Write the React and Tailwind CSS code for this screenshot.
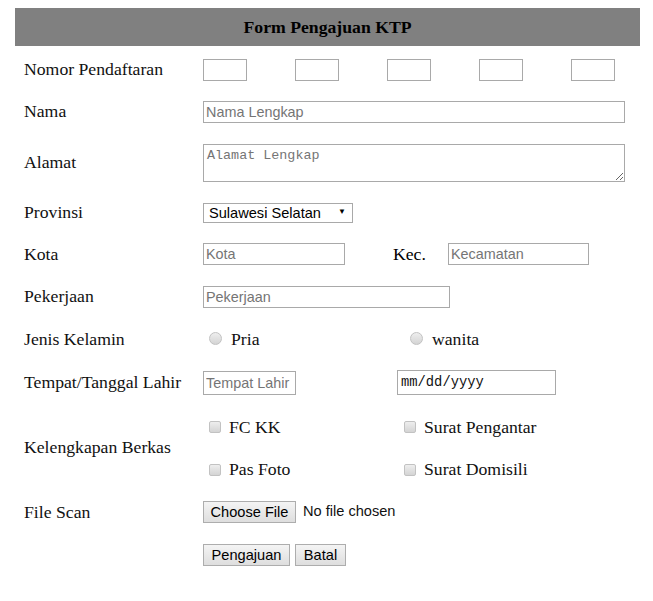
import React from "react";

const inputCls =
  "h-[22px] border border-[#a9a9a9] bg-white px-[2px] text-[14.4px] font-['Liberation_Sans',Arial,sans-serif] text-[#222] placeholder:text-[#757575] outline-none";
const btnCls =
  "h-[22px] whitespace-nowrap border border-[#adadad] bg-linear-to-b from-[#f4f4f4] to-[#dedede] px-[4px] text-[14.6px] leading-none font-['Liberation_Sans',Arial,sans-serif] text-black";
const radioCls =
  "appearance-none w-[13px] h-[13px] rounded-full border border-[#c2c2c2] bg-linear-to-b from-[#eeeeee] to-[#d4d4d4]";
const checkCls =
  "appearance-none w-[12px] h-[12px] rounded-[2px] border border-[#c2c2c2] bg-linear-to-b from-[#eeeeee] to-[#d4d4d4]";

function Row({ label, className, children }) {
  return (
    <div className={`flex items-center ${className}`}>
      <div className="w-[188px] shrink-0 pl-[9px]">{label}</div>
      <div className="flex items-center">{children}</div>
    </div>
  );
}

function Choice({ type, label, className }) {
  return (
    <label className={`flex items-center ${className}`}>
      <input type={type} name={type === "radio" ? "jk" : undefined} className={type === "radio" ? radioCls : checkCls} />
      <span className={type === "radio" ? "ml-[9px]" : "ml-[8px]"}>{label}</span>
    </label>
  );
}

export default function App() {
  return (
    <div className="min-h-screen bg-white font-['Liberation_Serif','Times_New_Roman',serif] text-[17.7px] text-[#111]">
      <div className="ml-[15px] w-[625px] pt-[8px]">
        {/* Judul form */}
        <div className="flex h-[38px] items-center justify-center bg-[#808080] font-bold text-black">
          Form Pengajuan KTP
        </div>

        <div className="mt-[3px]">
          <Row label="Nomor Pendaftaran" className="h-[41px]">
            <div className="flex gap-[48px]">
              <input className={`${inputCls} w-[44px]`} />
              <input className={`${inputCls} w-[44px]`} />
              <input className={`${inputCls} w-[44px]`} />
              <input className={`${inputCls} w-[44px]`} />
              <input className={`${inputCls} w-[44px]`} />
            </div>
          </Row>

          <Row label="Nama" className="h-[43px]">
            <input className={`${inputCls} w-[422px]`} placeholder="Nama Lengkap" />
          </Row>

          <Row label="Alamat" className="h-[58px]">
            <textarea
              className="mt-[2px] h-[38px] w-[422px] border border-[#a9a9a9] px-[3px] py-[3px] font-['Liberation_Mono',monospace] text-[13.4px] leading-[16px] text-[#222] placeholder:text-[#757575] outline-none"
              placeholder="Alamat Lengkap"
            />
          </Row>

          <Row label="Provinsi" className="h-[42px]">
            <div className="relative">
              <select className="h-[20px] w-[150px] appearance-none border border-[#a9a9a9] bg-white pl-[5px] text-[14.6px] leading-none font-['Liberation_Sans',Arial,sans-serif] text-black outline-none">
                <option>Sulawesi Selatan</option>
                <option>Sulawesi Barat</option>
              </select>
              <span className="pointer-events-none absolute inset-y-0 right-[7px] flex items-center text-[8px] leading-none text-black">▼</span>
            </div>
          </Row>

          <Row label="Kota" className="h-[42px]">
            <input className={`${inputCls} w-[142px]`} placeholder="Kota" />
            <span className="ml-[48px] w-[55px] text-black">Kec.</span>
            <input className={`${inputCls} w-[141px]`} placeholder="Kecamatan" />
          </Row>

          <Row label="Pekerjaan" className="h-[43px]">
            <input className={`${inputCls} w-[247px]`} placeholder="Pekerjaan" />
          </Row>

          <Row label="Jenis Kelamin" className="h-[42px]">
            <Choice type="radio" label="Pria" className="ml-[6px] w-[201px]" />
            <Choice type="radio" label="wanita" />
          </Row>

          <Row label="Tempat/Tanggal Lahir" className="h-[45px]">
            <input className={`${inputCls} h-[24px] w-[93px]`} placeholder="Tempat Lahir" />
            <input
              className="ml-[101px] h-[25px] w-[159px] border border-[#a9a9a9] px-[3px] font-['Liberation_Mono',monospace] text-[13.8px] text-[#111] outline-none"
              defaultValue="mm/dd/yyyy"
            />
          </Row>

          <div className="flex items-center">
            <div className="w-[188px] shrink-0 pl-[9px]">Kelengkapan Berkas</div>
            <div className="grid grid-cols-[195px_auto]">
              <Choice type="checkbox" label="FC KK" className="ml-[6px] h-[44px]" />
              <Choice type="checkbox" label="Surat Pengantar" className="ml-[6px] h-[44px]" />
              <Choice type="checkbox" label="Pas Foto" className="ml-[6px] h-[41px]" />
              <Choice type="checkbox" label="Surat Domisili" className="ml-[6px] h-[41px]" />
            </div>
          </div>

          <Row label="File Scan" className="h-[44px]">
            <button type="button" className={`${btnCls} w-[93px]`}>Choose File</button>
            <span className="ml-[7px] text-[14.6px] font-['Liberation_Sans',Arial,sans-serif] text-[#111]">No file chosen</span>
          </Row>

          <Row label="" className="h-[42px]">
            <button type="button" className={`${btnCls} w-[87px]`}>Pengajuan</button>
            <button type="button" className={`${btnCls} ml-[5px] w-[51px]`}>Batal</button>
          </Row>
        </div>
      </div>
    </div>
  );
}
